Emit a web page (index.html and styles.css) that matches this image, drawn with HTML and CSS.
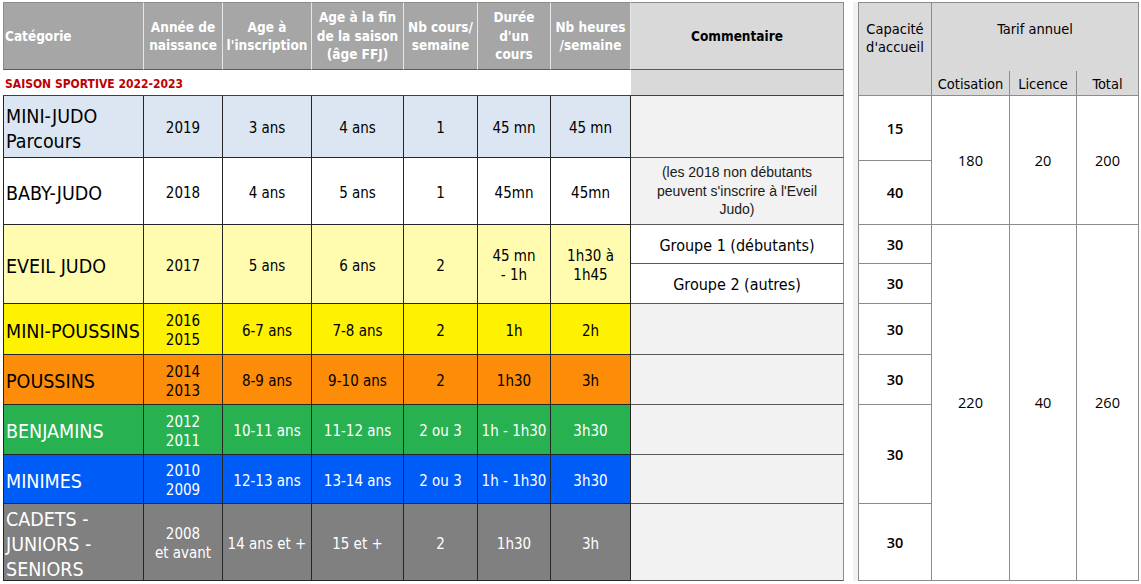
FILE: index.html
```html
<!DOCTYPE html>
<html lang="fr">
<head>
<meta charset="utf-8">
<title>Saison sportive 2022-2023</title>
<link rel="stylesheet" href="styles.css">
</head>
<body>
<div class="page">
  <div class="main">
    <div class="c h h-first h-left">Catégorie</div>
    <div class="c h">Année de<br>naissance</div>
    <div class="c h">Age à<br>l'inscription</div>
    <div class="c h">Age à la fin<br>de la saison<br>(âge FFJ)</div>
    <div class="c h">Nb cours/<br>semaine</div>
    <div class="c h">Durée<br>d'un<br>cours</div>
    <div class="c h">Nb heures<br>/semaine</div>
    <div class="c h h-com">Commentaire</div>

    <div class="c season cs7">SAISON SPORTIVE 2022-2023</div>
    <div class="c season-com"></div>

    <div class="c b cat r-blue">MINI-JUDO<br>Parcours</div>
    <div class="c b r-blue">2019</div>
    <div class="c b r-blue">3 ans</div>
    <div class="c b r-blue">4 ans</div>
    <div class="c b r-blue">1</div>
    <div class="c b r-blue">45 mn</div>
    <div class="c b r-blue">45 mn</div>
    <div class="c com"></div>

    <div class="c b cat r-white">BABY-JUDO</div>
    <div class="c b r-white">2018</div>
    <div class="c b r-white">4 ans</div>
    <div class="c b r-white">5 ans</div>
    <div class="c b r-white">1</div>
    <div class="c b r-white">45mn</div>
    <div class="c b r-white">45mn</div>
    <div class="c com com-note">(les 2018 non débutants<br>peuvent s'inscrire à l'Eveil<br>Judo)</div>

    <div class="c b cat r-pale rs2">EVEIL JUDO</div>
    <div class="c b r-pale rs2">2017</div>
    <div class="c b r-pale rs2">5 ans</div>
    <div class="c b r-pale rs2">6 ans</div>
    <div class="c b r-pale rs2">2</div>
    <div class="c b r-pale rs2">45 mn<br>- 1h</div>
    <div class="c b r-pale rs2">1h30 à<br>1h45</div>
    <div class="c b com com-group">Groupe 1 (débutants)</div>
    <div class="c b com com-group">Groupe 2 (autres)</div>

    <div class="c b cat r-yellow">MINI-POUSSINS</div>
    <div class="c b r-yellow">2016<br>2015</div>
    <div class="c b r-yellow">6-7 ans</div>
    <div class="c b r-yellow">7-8 ans</div>
    <div class="c b r-yellow">2</div>
    <div class="c b r-yellow">1h</div>
    <div class="c b r-yellow">2h</div>
    <div class="c com"></div>

    <div class="c b cat r-orange">POUSSINS</div>
    <div class="c b r-orange">2014<br>2013</div>
    <div class="c b r-orange">8-9 ans</div>
    <div class="c b r-orange">9-10 ans</div>
    <div class="c b r-orange">2</div>
    <div class="c b r-orange">1h30</div>
    <div class="c b r-orange">3h</div>
    <div class="c com"></div>

    <div class="c b cat r-green">BENJAMINS</div>
    <div class="c b r-green">2012<br>2011</div>
    <div class="c b r-green">10-11 ans</div>
    <div class="c b r-green">11-12 ans</div>
    <div class="c b r-green">2 ou 3</div>
    <div class="c b r-green">1h - 1h30</div>
    <div class="c b r-green">3h30</div>
    <div class="c com"></div>

    <div class="c b cat r-bleu">MINIMES</div>
    <div class="c b r-bleu">2010<br>2009</div>
    <div class="c b r-bleu">12-13 ans</div>
    <div class="c b r-bleu">13-14 ans</div>
    <div class="c b r-bleu">2 ou 3</div>
    <div class="c b r-bleu">1h - 1h30</div>
    <div class="c b r-bleu">3h30</div>
    <div class="c com"></div>

    <div class="c b cat r-gray">CADETS -<br>JUNIORS -<br>SENIORS</div>
    <div class="c b r-gray">2008<br>et avant</div>
    <div class="c b r-gray">14 ans et +</div>
    <div class="c b r-gray">15 et +</div>
    <div class="c b r-gray">2</div>
    <div class="c b r-gray">1h30</div>
    <div class="c b r-gray">3h</div>
    <div class="c com"></div>
  </div>

  <div class="side">
    <div class="s sh s-first rs2 s-top">Capacité<br>d'accueil</div>
    <div class="s sh cs3 s-top s-tarif">Tarif annuel</div>
    <div class="s sh s-sub">Cotisation</div>
    <div class="s sh s-sub">Licence</div>
    <div class="s sh s-sub">Total</div>

    <div class="s s-first cap">15</div>
    <div class="s rs2 price">180</div>
    <div class="s rs2 price">20</div>
    <div class="s rs2 price">200</div>
    <div class="s s-first cap">40</div>

    <div class="s s-first cap">30</div>
    <div class="s rs6 price">220</div>
    <div class="s rs6 price">40</div>
    <div class="s rs6 price">260</div>
    <div class="s s-first cap">30</div>
    <div class="s s-first cap">30</div>
    <div class="s s-first cap">30</div>
    <div class="s s-first cap">30</div>
    <div class="s s-first cap">30</div>
  </div>
</div>
</body>
</html>
```

FILE: styles.css
```css
* { box-sizing: border-box; }

html, body {
  margin: 0;
  padding: 0;
  background: #ffffff;
}

.page {
  display: flex;
  align-items: flex-start;
  gap: 14px;
  padding: 2px 0 0 3px;
  font-family: "DejaVu Sans Condensed", "DejaVu Sans", sans-serif;
  color: #000;
}

/* ---------- main table ---------- */
.main {
  display: grid;
  grid-template-columns: 141px 79px 89px 92px 74px 73px 80px 213px;
  grid-template-rows: 68px 26px 62px 67px 39px 40px 51px 50px 50px 49px 77px;
}

.c {
  display: flex;
  align-items: center;
  justify-content: center;
  text-align: center;
  border-right: 1px solid #262626;
  border-bottom: 1px solid #262626;
  font-size: 15px;
  line-height: 19px;
}

/* body cells sit a little lower than the geometric centre */
.b { padding-top: 4px; }

.cs7 { grid-column: span 7; }
.rs2 { grid-row: span 2; }
.rs6 { grid-row: span 6; }
.cs3 { grid-column: span 3; }

/* header */
.h {
  background: #a6a6a6;
  color: #ffffff;
  font-weight: bold;
  font-size: 13.5px;
  line-height: 18.5px;
  border-top: 1px solid #8c8c8c;
  border-right: 1px solid #e6e6e6;
  border-bottom: 1px solid #595959;
}
.h-first { border-left: 1px solid #8c8c8c; }
.h-left { justify-content: flex-start; text-align: left; padding-left: 1px; }
.h-com {
  background: #d9d9d9;
  color: #000;
  border-right: 1px solid #8c8c8c;
}

/* season row */
.season {
  justify-content: flex-start;
  padding: 4px 0 0 2px;
  color: #c00000;
  font-weight: bold;
  font-size: 12px;
  background: #ffffff;
  border-right: none;
  border-bottom: 1px solid #404040;
}
.season-com {
  background: #d9d9d9;
  border-right: 1px solid #8c8c8c;
  border-bottom: 1px solid #404040;
}

/* category column */
.cat {
  justify-content: flex-start;
  text-align: left;
  padding-left: 2px;
  font-size: 19.5px;
  line-height: 25px;
  white-space: nowrap;
  border-left: 1px solid #262626;
}

/* row colours */
.r-blue { background: #dce6f2; }
.r-white { background: #ffffff; }
.r-pale { background: #fffcb0; }
.r-yellow { background: #fff200; }
.r-orange { background: #fd8c08; }
.r-green { background: #28b151; color: #ffffff; }
.r-bleu { background: #005cf7; color: #ffffff; }
.r-gray { background: #808080; color: #ffffff; }

/* comments */
.com {
  background: #f2f2f2;
  border-right: 1px solid #8c8c8c;
  border-bottom: 1px solid #595959;
}
.com-note {
  font-family: "Liberation Sans", Arial, sans-serif;
  font-size: 14px;
  line-height: 18.5px;
  color: #1a1a1a;
}
.com-group {
  background: #ffffff;
  font-size: 16px;
  padding-top: 2px;
}

/* ---------- side table ---------- */
.side {
  display: grid;
  grid-template-columns: 74px 78px 67px 62px;
  grid-template-rows: 69px 25px 65px 64px 39px 40px 51px 50px 99px 77px;
  font-size: 14.5px;
  box-shadow: -5px 0 0 #f2f2f2;
}

.s {
  display: flex;
  align-items: center;
  justify-content: center;
  text-align: center;
  border-right: 1px solid #8c8c8c;
  border-bottom: 1px solid #8c8c8c;
  background: #ffffff;
}
.s-first { border-left: 1px solid #8c8c8c; }

.sh {
  background: #d9d9d9;
  font-size: 14.5px;
  line-height: 18px;
}
.s-top {
  border-top: 1px solid #8c8c8c;
  align-items: flex-start;
  padding-top: 17px;
}
.s-tarif { border-bottom: none; }
.s-sub { padding-top: 1px; }

.cap {
  font-family: "Open Sans", "Noto Sans", sans-serif;
  font-stretch: normal;
  font-weight: 600;
  font-size: 14.5px;
}
.price {
  font-family: "Open Sans", "Noto Sans", sans-serif;
  font-stretch: normal;
  font-size: 14.5px;
}
```
